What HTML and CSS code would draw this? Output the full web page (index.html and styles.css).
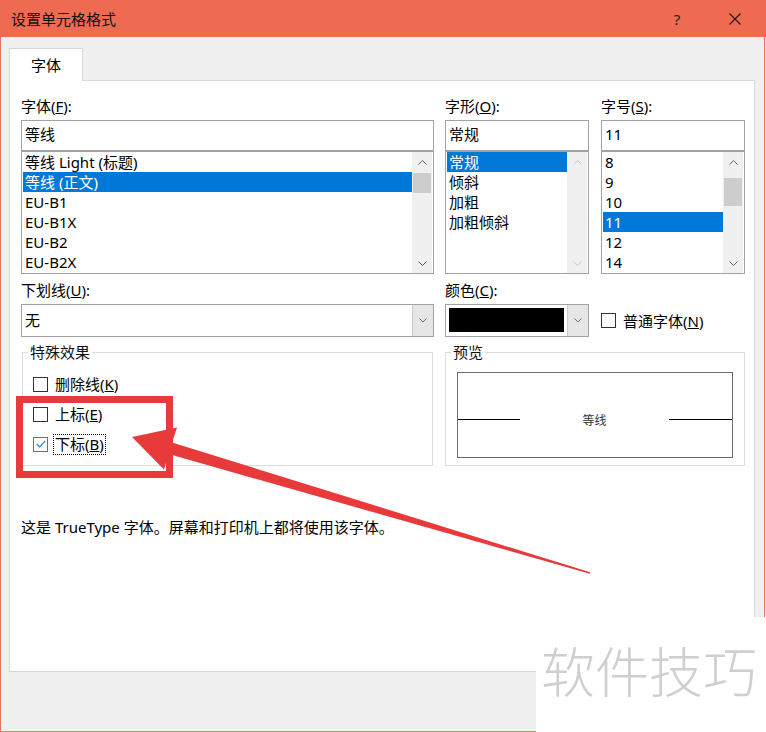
FILE: index.html
```html
<!DOCTYPE html>
<html lang="zh-CN">
<head>
<meta charset="utf-8">
<title>设置单元格格式</title>
<link rel="stylesheet" href="styles.css">
</head>
<body>
<div class="window">
  <header class="titlebar">
    <span class="title">设置单元格格式</span>
    <span class="tb-btn help">?</span>
    <span class="tb-btn close"><svg width="12" height="12" viewBox="0 0 12 12"><path d="M0.5 0.5 L11.5 11.5 M11.5 0.5 L0.5 11.5" stroke="#1a1a1a" stroke-width="1.1" fill="none"/></svg></span>
  </header>
  <div class="content">
    <div class="tabs"><div class="tab">字体</div></div>
    <div class="panel">
      <div class="row row-lists">
        <div class="col col-font">
          <div class="label">字体(<u>F</u>):</div>
          <div class="field">等线</div>
          <div class="listbox">
            <div class="items">
              <div class="item">等线 Light (标题)</div>
              <div class="item selected">等线 (正文)</div>
              <div class="item">EU-B1</div>
              <div class="item">EU-B1X</div>
              <div class="item">EU-B2</div>
              <div class="item">EU-B2X</div>
            </div>
            <div class="scrollbar">
              <div class="sb-btn"><svg width="9" height="5" viewBox="0 0 9 5"><polyline points="0.5,4.5 4.5,0.5 8.5,4.5" fill="none" stroke="#606060"/></svg></div>
              <div class="sb-track"><div class="sb-thumb thumb-font"></div></div>
              <div class="sb-btn"><svg width="9" height="5" viewBox="0 0 9 5"><polyline points="0.5,0.5 4.5,4.5 8.5,0.5" fill="none" stroke="#606060"/></svg></div>
            </div>
          </div>
        </div>
        <div class="col col-style">
          <div class="label">字形(<u>O</u>):</div>
          <div class="field">常规</div>
          <div class="listbox">
            <div class="items">
              <div class="item selected">常规</div>
              <div class="item">倾斜</div>
              <div class="item">加粗</div>
              <div class="item">加粗倾斜</div>
            </div>
            <div class="scrollbar">
              <div class="sb-btn"><svg width="9" height="5" viewBox="0 0 9 5"><polyline points="0.5,4.5 4.5,0.5 8.5,4.5" fill="none" stroke="#c6c6c6"/></svg></div>
              <div class="sb-track"></div>
              <div class="sb-btn"><svg width="9" height="5" viewBox="0 0 9 5"><polyline points="0.5,0.5 4.5,4.5 8.5,0.5" fill="none" stroke="#c6c6c6"/></svg></div>
            </div>
          </div>
        </div>
        <div class="col col-size">
          <div class="label">字号(<u>S</u>):</div>
          <div class="field">11</div>
          <div class="listbox">
            <div class="items">
              <div class="item">8</div>
              <div class="item">9</div>
              <div class="item">10</div>
              <div class="item selected">11</div>
              <div class="item">12</div>
              <div class="item">14</div>
            </div>
            <div class="scrollbar">
              <div class="sb-btn"><svg width="9" height="5" viewBox="0 0 9 5"><polyline points="0.5,4.5 4.5,0.5 8.5,4.5" fill="none" stroke="#606060"/></svg></div>
              <div class="sb-track"><div class="sb-thumb thumb-size"></div></div>
              <div class="sb-btn"><svg width="9" height="5" viewBox="0 0 9 5"><polyline points="0.5,0.5 4.5,4.5 8.5,0.5" fill="none" stroke="#606060"/></svg></div>
            </div>
          </div>
        </div>
      </div>

      <div class="row row-opts">
        <div class="col col-font">
          <div class="label">下划线(<u>U</u>):</div>
          <div class="combo">
            <span class="combo-value">无</span>
            <span class="combo-btn"><svg width="8" height="5" viewBox="0 0 8 5"><polyline points="0.5,0.5 4,4 7.5,0.5" fill="none" stroke="#707070"/></svg></span>
          </div>
        </div>
        <div class="col col-style">
          <div class="label">颜色(<u>C</u>):</div>
          <div class="combo">
            <span class="swatch"></span>
            <span class="combo-btn"><svg width="8" height="5" viewBox="0 0 8 5"><polyline points="0.5,0.5 4,4 7.5,0.5" fill="none" stroke="#707070"/></svg></span>
          </div>
        </div>
        <div class="col col-size opt">
          <span class="cb"></span><span class="cb-label">普通字体(<u>N</u>)</span>
        </div>
      </div>

      <div class="row row-groups">
        <fieldset class="group effects">
          <legend>特殊效果</legend>
          <div class="group-body">
            <div class="cb-row"><span class="cb"></span><span class="cb-label">删除线(<u>K</u>)</span></div>
            <div class="cb-row"><span class="cb"></span><span class="cb-label">上标(<u>E</u>)</span></div>
            <div class="cb-row"><span class="cb checked"><svg width="10" height="8" viewBox="0 0 10 8"><polyline points="0.8,4 3.6,6.8 9.2,0.8" fill="none" stroke="#2f7bd0" stroke-width="1.2"/></svg></span><span class="cb-label focus">下标(<u>B</u>)</span></div>
          </div>
        </fieldset>
        <fieldset class="group preview">
          <legend>预览</legend>
          <div class="group-body">
            <div class="preview-box">
              <span class="pv-line left"></span>
              <span class="pv-text">等线</span>
              <span class="pv-line right"></span>
            </div>
          </div>
        </fieldset>
      </div>

      <p class="desc">这是 TrueType 字体。屏幕和打印机上都将使用该字体。</p>
    </div>
  </div>
</div>

<svg class="annot" width="766" height="732" viewBox="0 0 766 732">
  <rect x="19.5" y="399.5" width="150" height="75" fill="none" stroke="#e83a3b" stroke-width="7"/>
  <polygon points="132,437 177,427.5 172.1,442.5 590.2,572.3 589.8,573.7 168.7,454.1 164,469.5" fill="#e83a3b"/>
</svg>

<div class="watermark">软件技巧</div>
</body>
</html>
```

FILE: styles.css
```css
* { box-sizing: border-box; }
html, body { margin: 0; padding: 0; }
body {
  width: 766px;
  height: 732px;
  overflow: hidden;
  position: relative;
  background: #f7e4df;
  font-family: "Noto Sans", "Noto Sans CJK SC", sans-serif;
  font-size: 15px;
  color: #000;
}

.window {
  width: 766px;
  height: 732px;
  display: flex;
  flex-direction: column;
}

.titlebar {
  height: 37px;
  flex: 0 0 37px;
  background: #ee6a51;
  display: flex;
  align-items: center;
  padding-right: 2px;
}
.title {
  flex: 1;
  padding-left: 11px;
  line-height: 20px;
  color: #111;
}
.tb-btn {
  width: 58px;
  height: 37px;
  display: flex;
  align-items: center;
  justify-content: center;
  color: #222;
}
.help { font-size: 15px; }

.content {
  flex: 1;
  width: 765px;
  background: #f0f0f0;
  border-left: 1px solid #e2775f;
  border-right: 1px solid #e2775f;
  border-bottom: 1px solid #d98270;
  padding: 11px 9px 0 8px;
}

.tabs { display: flex; height: 32px; }
.tab {
  width: 74px;
  height: 33px;
  position: relative;
  z-index: 1;
  background: #fff;
  border: 1px solid #d9d9d9;
  border-bottom: none;
  text-align: center;
  line-height: 33px;
}

.panel {
  height: 592px;
  background: #fff;
  border: 1px solid #d9d9d9;
  padding: 15px 0 0 11px;
}

.row { display: flex; }
.col { display: flex; flex-direction: column; }
.col-font { width: 413px; }
.col-style { width: 144px; margin-left: 11px; }
.col-size { width: 144px; margin-left: 12px; }

.label {
  line-height: 20px;
  height: 20px;
  margin-bottom: 4px;
  white-space: nowrap;
}

.field {
  height: 31px;
  border: 1px solid #a2a2a2;
  padding: 0 3px;
  line-height: 27px;
}

.listbox {
  height: 123px;
  border: 1px solid #a2a2a2;
  padding: 0 1px;
  display: flex;
}
.items { flex: 1; min-width: 0; }
.item {
  height: 20px;
  line-height: 20px;
  padding-left: 2px;
  white-space: nowrap;
}
.item.selected { background: #0078d7; color: #fff; }

.scrollbar {
  width: 20px;
  background: #f0f0f0;
  display: flex;
  flex-direction: column;
}
.sb-btn {
  height: 20px;
  display: flex;
  align-items: center;
  justify-content: center;
}
.sb-track { flex: 1; }
.sb-thumb { background: #cdcdcd; margin: 0 1px; }
.thumb-font { margin-top: 1px; height: 20px; }
.thumb-size { margin-top: 6px; height: 28px; }

.row-opts { margin-top: 6px; }
.combo {
  height: 33px;
  border: 1px solid #a2a2a2;
  display: flex;
  background: #fff;
}
.combo-value { flex: 1; padding-left: 3px; line-height: 30px; }
.combo-btn {
  width: 21px;
  background: #e6e6e6;
  border-left: 1px solid #cccccc;
  display: flex;
  align-items: center;
  justify-content: center;
}
.swatch { flex: 1; background: #000; margin: 3px 3px 4px 3px; }

.opt {
  flex-direction: row;
  align-items: center;
  align-self: flex-end;
  height: 33px;
}

.cb {
  width: 15px;
  height: 15px;
  flex: 0 0 15px;
  border: 1px solid #333;
  background: #fff;
  display: flex;
  align-items: center;
  justify-content: center;
}
.cb.checked { border-color: #52779c; }
.cb-label { margin-left: 7px; line-height: 20px; white-space: nowrap; }

.row-groups { margin-top: 5px; }
.group {
  margin: 0;
  padding: 0;
  border: 1px solid #dcdcdc;
  min-width: 0;
}
.group legend {
  padding: 0 2px;
  margin-left: 5px;
  line-height: 20px;
  color: #111;
}
.effects {
  width: 411px;
  margin-left: 1px;
}
.effects .group-body { padding: 7px 0 4px 10px; }
.cb-row {
  height: 30px;
  display: flex;
  align-items: center;
}
.focus {
  margin-left: 5px;
  border: 1px dotted #000;
  padding: 0 1px;
  line-height: 19px;
}

.preview {
  width: 300px;
  margin-left: 12px;
}
.preview .group-body { padding: 10px 11px 7px 11px; }
.preview-box {
  height: 86px;
  border: 1px solid #6b6b6b;
  display: flex;
  align-items: center;
  padding-top: 9px;
}
.pv-line { height: 1px; background: #000; }
.pv-line.left { width: 62px; }
.pv-line.right { width: 63px; }
.pv-text {
  flex: 1;
  text-align: center;
  font-size: 12px;
  color: #333;
}

.desc {
  margin: 51px 0 0 0;
  line-height: 20px;
}

.annot {
  position: absolute;
  left: 0;
  top: 0;
  pointer-events: none;
}

.watermark {
  position: absolute;
  left: 536px;
  top: 617px;
  width: 230px;
  height: 115px;
  background: #fff;
  padding: 23px 0 0 5px;
  font-family: "Noto Sans CJK SC", sans-serif;
  font-weight: 300;
  font-size: 54px;
  line-height: 60px;
  color: #cfcfcf;
  white-space: nowrap;
}
```
